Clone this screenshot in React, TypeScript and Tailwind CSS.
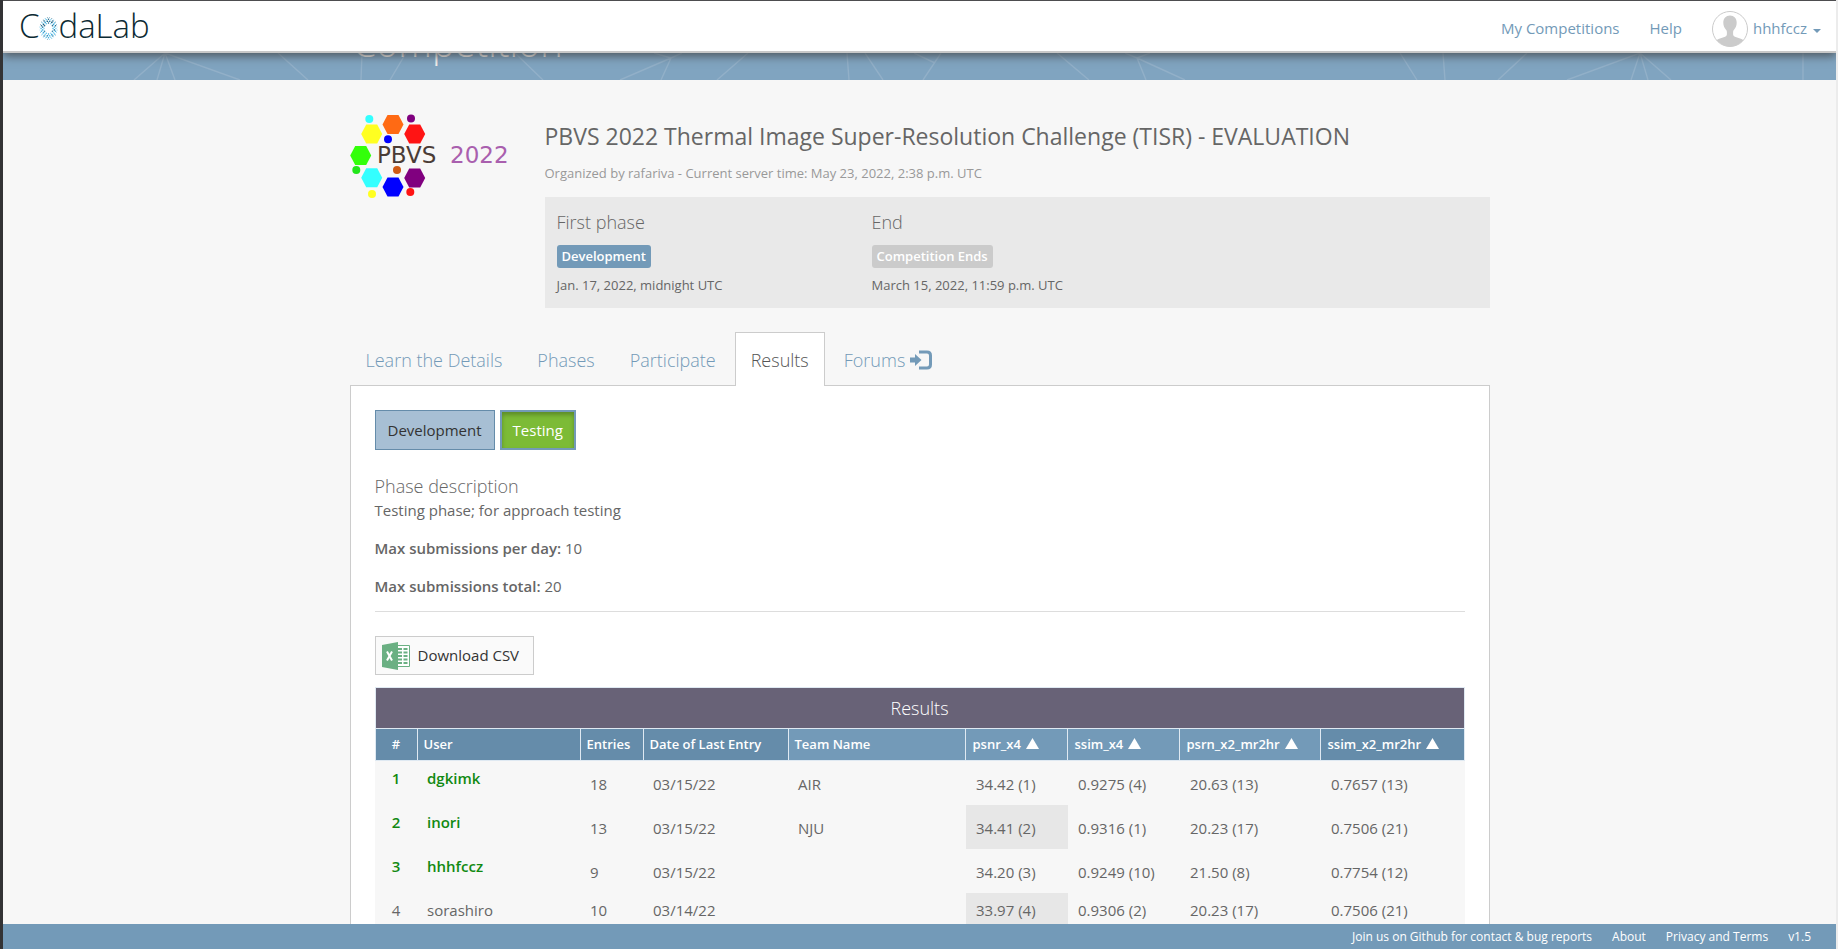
import React from "react";

const navLink = "text-[#739ab8] hover:underline";

const bannerLines = [
  "M165 0L134 27M165 0L157 27M165 0L175 27M165 0L240 27",
  "M278 0L308 27M362 0L361 27M406 0L390 27M515 0L543 27",
  "M654 0L671 5L682 0M671 5L620 27M671 5L661 27M748 0L717 27",
  "M847 0L849 27M865 0L883 27M914 0L935 10M941 0L923 27M1057 0L1089 27",
  "M1125 0L1137 5L1150 0M1137 5L1146 27M1137 5L1185 27",
  "M1400 0L1417 27M1443 0L1445 27M1527 0L1498 27",
  "M1640 0L1567 27M1640 0L1631 27M1640 0L1648 27M1640 0L1671 27M1803 0L1803 27",
];

function DottedRing() {
  const rings = [
    { r: 5, n: 12, size: 0.8 },
    { r: 6.6, n: 16, size: 0.9 },
    { r: 8.2, n: 20, size: 0.8 },
    { r: 9.6, n: 24, size: 0.5 },
  ];
  const colors = ["#4fc0ea", "#2a7fa8", "#8ad4f1", "#3aa9dc", "#1d5570"];
  return (
    <svg className="mt-1" width="19" height="25" viewBox="-10 -12 20 24" aria-hidden="true">
      {rings.map((ring, k) =>
        Array.from({ length: ring.n }, (_, i) => {
          const a = ((i + (k % 2) * 0.5) / ring.n) * Math.PI * 2;
          const y = Math.sin(a) * ring.r * 1.18;
          return (
            <circle
              key={`${k}-${i}`}
              cx={Math.cos(a) * ring.r * 0.95}
              cy={y}
              r={ring.size}
              fill={y < -2 && i % 2 ? "#1d6485" : colors[(i + k) % 4]}
            />
          );
        }),
      )}
    </svg>
  );
}

function Header() {
  return (
    <header className="relative z-10 flex h-[53px] shrink-0 items-center justify-between border-t border-b-2 border-t-[#4d4d4f] border-b-[#c8c8c8] bg-white pr-[15px] pl-4 shadow-[0_3px_9px_rgba(60,60,60,0.75)]">
      <a
        href="#home"
        aria-label="CodaLab"
        className="flex items-center text-[33px] leading-[50px] font-light text-[#0c2a33]"
      >
        <span>C</span>
        <DottedRing />
        <span>daLab</span>
      </a>
      <nav className="flex items-center pt-[5px] text-[15px]">
        <a href="#my" className={navLink}>My Competitions</a>
        <a href="#help" className={`ml-[30px] ${navLink}`}>Help</a>
        <button type="button" className="ml-[30px] flex items-center text-[#739ab8]">
          <svg width="36" height="36" viewBox="0 0 36 36" aria-hidden="true">
            <clipPath id="avatar"><circle cx="18" cy="18" r="17.5" /></clipPath>
            <g clipPath="url(#avatar)" fill="#cbcbcb">
              <path d="M18 4.500c4 0 6.700 3 6.700 7.300 0 2.800-1.100 5.400-2.700 6.900-.6.600-.9 1.400-.9 2.300v2.200c0 1.200.7 2 1.800 2.500l6.600 2.200c2 .9 3.200 2 4 3.900V36H2.500v-4.200c.8-1.900 2-3 4-3.900l6.600-2.200c1.100-.5 1.800-1.300 1.800-2.500V21c0-.9-.3-1.700-.9-2.300-1.600-1.500-2.700-4.100-2.700-6.900C11.300 7.500 14 4.500 18 4.500z" />
            </g>
            <circle cx="18" cy="18" r="17.500" fill="none" stroke="#cbcbcb" />
          </svg>
          <span className="ml-[5px]">hhhfccz</span>
          <svg className="mt-1 ml-[6px]" width="8" height="4" viewBox="0 0 8 4" aria-hidden="true">
            <path d="M0 0h8L4 4z" fill="#739ab8" />
          </svg>
        </button>
      </nav>
    </header>
  );
}

function Banner() {
  return (
    <div className="relative -mt-8 flex h-[59px] shrink-0 flex-col overflow-hidden bg-[#80a4c0]">
      <svg className="absolute top-8 left-0" width="1836" height="27" viewBox="3 0 1836 27" aria-hidden="true">
        <path d={bannerLines.join("")} fill="none" stroke="#92b0c8" strokeWidth="1.400" />
      </svg>
      <div className="relative mx-auto w-full max-w-[1140px]">
        <h1 className="pl-[3px] text-[38px] leading-[42px] font-light text-[#f2efec]">Competition</h1>
      </div>
    </div>
  );
}

function hexagon(cx: number, cy: number) {
  return [
    [-10.5, 0], [-5.5, -9.5], [5.5, -9.5], [10.5, 0], [5.5, 9.5], [-5.5, 9.5],
  ].map(([x, y]) => `${cx + x},${cy + y}`).join(" ");
}

const hexes: [number, number, string][] = [
  [43, 14.5, "#ff6a14"], [21.7, 24, "#ffff21"], [64.7, 24, "#ff1414"], [10.7, 45.5, "#33ff0a"],
  [21.7, 67.7, "#33ffff"], [43, 77, "#0000ff"], [64.7, 68, "#80007f"],
];
const dots: [number, number, string][] = [
  [19.3, 9, "#33ffff"], [61, 8.5, "#80007f"], [38, 29.3, "#0000ff"], [6.3, 60, "#22e61a"],
  [47, 60, "#cf5a14"], [22, 84, "#ffff21"], [60.3, 82, "#ff1414"],
];

function ChallengeLogo() {
  return (
    <svg width="170" height="92" viewBox="0 0 170 92" role="img" aria-label="PBVS 2022">
      {hexes.map(([x, y, c]) => <polygon key={`h${x}-${y}`} points={hexagon(x, y)} fill={c} />)}
      {dots.map(([x, y, c]) => <circle key={`d${x}-${y}`} cx={x} cy={y} r="4" fill={c} />)}
      <text x="27" y="53" fontSize="23" fontFamily="DejaVu Sans" fill="#4a3c36">PBVS</text>
      <text x="100" y="53" fontSize="23" fontFamily="DejaVu Sans" fill="#a95fae">2022</text>
    </svg>
  );
}

function Phase({ title, badge, date, badgeClass }: { title: string; badge: string; date: string; badgeClass: string }) {
  return (
    <div className="px-3">
      <h4 className="text-[18px] leading-[26px] font-light">{title}</h4>
      <span className={`mt-[10px] inline-block rounded-[3px] px-[5px] text-[13px] leading-[23px] font-semibold text-white ${badgeClass}`}>
        {badge}
      </span>
      <p className="mt-[6px] text-[13px] leading-[22px]">{date}</p>
    </div>
  );
}

function Intro() {
  return (
    <section className="flex pt-[30px]">
      <div className="w-[195px] shrink-0"><ChallengeLogo /></div>
      <div className="grow">
        <h3 className="mt-[9px] text-[23px] leading-[34px]">
          PBVS 2022 Thermal Image Super-Resolution Challenge (TISR) - EVALUATION
        </h3>
        <p className="mt-[9px] text-[13px] leading-[22px] text-[#999]">
          Organized by rafariva - Current server time: May 23, 2022, 2:38 p.m. UTC
        </p>
        <div className="mt-[13px] grid grid-cols-3 bg-[#e9e9e9] py-3">
          <Phase title="First phase" badge="Development" date="Jan. 17, 2022, midnight UTC" badgeClass="bg-[#739ab8]" />
          <Phase title="End" badge="Competition Ends" date="March 15, 2022, 11:59 p.m. UTC" badgeClass="bg-[#cbcbcb]" />
        </div>
      </div>
    </section>
  );
}

const tabs = ["Learn the Details", "Phases", "Participate", "Results", "Forums"];

function Tabs() {
  return (
    <nav className="mt-6 flex gap-[3px] text-[18px] font-light">
      {tabs.map((t) => (
        <a
          key={t}
          href={`#${t.toLowerCase().replace(/ /g, "-")}`}
          className={
            t === "Results"
              ? "relative z-[1] -mb-px flex h-[54px] items-center border border-b-0 border-[#ccc] bg-white px-[15px] pt-[2px] text-[#555]"
              : "flex h-[53px] items-center px-4 pt-[3px] text-[#739ab8]"
          }
        >
          {t}
          {t === "Forums" && (
            <svg className="ml-[5px]" width="22" height="20" viewBox="0 0 22 20" aria-hidden="true">
              <path d="M0 7.500h5V4l6.500 6L5 16v-3.500H0z" fill="#739ab8" />
              <path d="M9 2h8q3.500 0 3.500 3.500v9q0 3.500-3.500 3.500H9" fill="none" stroke="#739ab8" strokeWidth="3" />
            </svg>
          )}
        </a>
      ))}
    </nav>
  );
}

function SheetIcon() {
  return (
    <svg width="28" height="28" viewBox="0 0 28 28" aria-hidden="true">
      <path d="M14 3.500h13.500v21H14z" fill="#fff" stroke="#6bb083" />
      <g fill="#6bb083">
        {[6, 9.5, 13, 16.5, 20].map((y) => (
          <React.Fragment key={y}>
            <rect x="16" y={y} width="4" height="2" />
            <rect x="21.500" y={y} width="4" height="2" />
          </React.Fragment>
        ))}
        <path d="M0 3L16 0v28L0 25z" />
      </g>
      <path d="M5 9.500l5 9M10 9.500l-5 9" stroke="#fff" strokeWidth="2" />
    </svg>
  );
}

const columns = [
  { label: "#", width: "w-[42px]", dark: true, sort: false },
  { label: "User", width: "w-[163px]", dark: true, sort: false },
  { label: "Entries", width: "w-[63px]", dark: true, sort: false },
  { label: "Date of Last Entry", width: "w-[145px]", dark: true, sort: false },
  { label: "Team Name", width: "", dark: false, sort: false },
  { label: "psnr_x4", width: "w-[102px]", dark: false, sort: true },
  { label: "ssim_x4", width: "w-[112px]", dark: false, sort: true },
  { label: "psrn_x2_mr2hr", width: "w-[141px]", dark: false, sort: true },
  { label: "ssim_x2_mr2hr", width: "w-[143px]", dark: true, sort: true },
];

const rows = [
  ["1", "dgkimk", "18", "03/15/22", "AIR", "34.42 (1)", "0.9275 (4)", "20.63 (13)", "0.7657 (13)"],
  ["2", "inori", "13", "03/15/22", "NJU", "34.41 (2)", "0.9316 (1)", "20.23 (17)", "0.7506 (21)"],
  ["3", "hhhfccz", "9", "03/15/22", "", "34.20 (3)", "0.9249 (10)", "21.50 (8)", "0.7754 (12)"],
  ["4", "sorashiro", "10", "03/14/22", "", "33.97 (4)", "0.9306 (2)", "20.23 (17)", "0.7506 (21)"],
];

function ResultsTable() {
  return (
    <table className="mt-3 w-full table-fixed border-collapse bg-[#f7f7f7] text-left">
      <colgroup>
        {columns.map((c) => <col key={c.label} className={c.width} />)}
      </colgroup>
      <thead>
        <tr>
          <th colSpan={9} className="h-[41px] border border-[#dfe9f2] bg-[#686277] text-center text-[18px] font-light text-white">
            Results
          </th>
        </tr>
        <tr>
          {columns.map((c, i) => (
            <th
              key={c.label}
              className={`h-8 border border-[#dfe9f2] text-[13px] font-semibold whitespace-nowrap text-white ${c.dark ? "bg-[#658caa]" : "bg-[#739ab8]"} ${i === 0 ? "text-center" : "pl-[6px]"}`}
            >
              {c.label}
              {c.sort && (
                <svg className="ml-[5px] inline-block align-baseline" width="13" height="11" viewBox="0 0 13 11" aria-hidden="true">
                  <path d="M6.500 0L13 11H0z" fill="#fff" />
                </svg>
              )}
            </th>
          ))}
        </tr>
      </thead>
      <tbody className="text-[15px] leading-5">
        {rows.map((r, ri) => {
          const top = ri < 3;
          return (
            <tr key={r[0]} className={top ? "h-[44px]" : "h-[36px]"}>
              {r.map((cell, ci) => (
                <td
                  key={ci}
                  className={
                    ci < 2
                      ? `pt-[7px] align-top ${ci === 0 ? "text-center" : "pl-[10px]"} ${top ? "font-semibold text-[#128a12]" : ""}`
                      : `pl-[10px] align-top ${top ? "pt-[13px]" : "pt-[7px]"} ${ci === 5 && ri % 2 ? "bg-[#e7e7e7]" : ""}`
                  }
                >
                  {cell}
                </td>
              ))}
            </tr>
          );
        })}
      </tbody>
    </table>
  );
}

function Footer() {
  return (
    <footer className="relative z-10 flex h-[25px] shrink-0 items-center justify-end gap-[20px] bg-[#739ab8] pr-[25px] text-[12px] text-white">
      <a href="#github">Join us on Github for contact &amp; bug reports</a>
      <a href="#about">About</a>
      <a href="#privacy">Privacy and Terms</a>
      <span>v1.5</span>
    </footer>
  );
}

export default function App() {
  return (
    <div className="flex h-screen flex-col overflow-hidden border-r-2 border-l-3 border-r-[#ececec] border-l-[#333335] bg-[#f7f7f7] font-['Open_Sans',sans-serif] text-[#666]">
      <Header />
      <Banner />
      <main className="min-h-0 w-full flex-1 overflow-hidden">
        <div className="mx-auto max-w-[1140px]">
          <Intro />
          <Tabs />
          <section className="border border-[#ccc] bg-white p-6">
            <div className="flex gap-[5px] text-[15px]">
              <button type="button" className="h-10 border border-[#658caa] bg-[#a7bfd4] px-3 text-[#333]">Development</button>
              <button type="button" className="h-10 border-2 border-[#739ab8] bg-[#7cbb36] px-[11px] text-white shadow-[inset_0_3px_4px_rgba(0,0,0,0.25)]">Testing</button>
            </div>
            <h4 className="mt-6 text-[18px] leading-[24px] font-light">Phase description</h4>
            <p className="text-[15px] leading-[25px]">Testing phase; for approach testing</p>
            <p className="mt-[13px] text-[15px] leading-[25px]"><b className="font-semibold">Max submissions per day:</b> 10</p>
            <p className="mt-[13px] text-[15px] leading-[25px]"><b className="font-semibold">Max submissions total:</b> 20</p>
            <hr className="mt-[12px] mb-6 border-[#ddd]" />
            <button type="button" className="flex h-[39px] items-center gap-2 border border-[#ccc] bg-[#fafafa] pr-[14px] pl-[6px] text-[15px] text-[#333]">
              <SheetIcon />
              Download CSV
            </button>
            <ResultsTable />
          </section>
        </div>
      </main>
      <Footer />
    </div>
  );
}
